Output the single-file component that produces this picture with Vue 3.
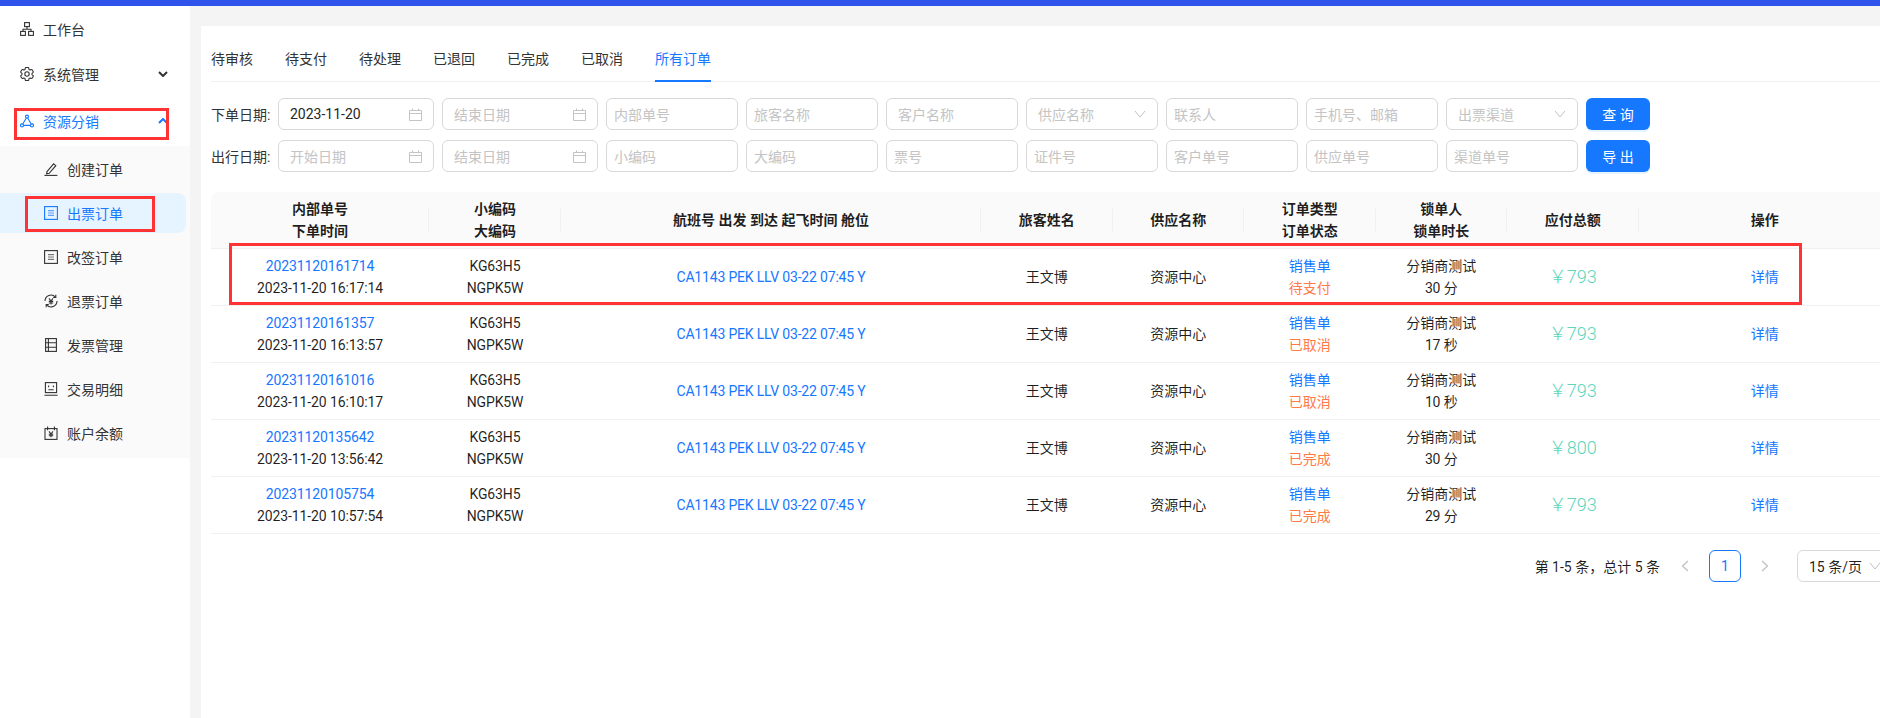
<script setup>
const subItems = [
  { label: '创建订单', icon: 'edit' },
  { label: '出票订单', icon: 'list', active: true },
  { label: '改签订单', icon: 'list' },
  { label: '退票订单', icon: 'refund' },
  { label: '发票管理', icon: 'invoice' },
  { label: '交易明细', icon: 'face' },
  { label: '账户余额', icon: 'wallet' }
]
const tabs = ['待审核', '待支付', '待处理', '已退回', '已完成', '已取消', '所有订单']
const filterRows = [
  {
    label: '下单日期:',
    fields: [
      { text: '2023-11-20', type: 'date', value: true },
      { text: '结束日期', type: 'date' },
      { text: '内部单号' },
      { text: '旅客名称' },
      { text: '客户名称', wide: true },
      { text: '供应名称', type: 'select' },
      { text: '联系人' },
      { text: '手机号、邮箱' },
      { text: '出票渠道', type: 'select' }
    ],
    button: '查 询'
  },
  {
    label: '出行日期:',
    fields: [
      { text: '开始日期', type: 'date' },
      { text: '结束日期', type: 'date' },
      { text: '小编码' },
      { text: '大编码' },
      { text: '票号' },
      { text: '证件号' },
      { text: '客户单号' },
      { text: '供应单号' },
      { text: '渠道单号' }
    ],
    button: '导 出'
  }
]
const orders = [
  { id: '20231120161714', time: '2023-11-20 16:17:14', status: '待支付', lock: '30 分', price: '793' },
  { id: '20231120161357', time: '2023-11-20 16:13:57', status: '已取消', lock: '17 秒', price: '793' },
  { id: '20231120161016', time: '2023-11-20 16:10:17', status: '已取消', lock: '10 秒', price: '793' },
  { id: '20231120135642', time: '2023-11-20 13:56:42', status: '已完成', lock: '30 分', price: '800' },
  { id: '20231120105754', time: '2023-11-20 10:57:54', status: '已完成', lock: '29 分', price: '793' }
]
</script>

<template>
  <div class="page">
    <div class="topbar"></div>
    <div class="body">
      <aside class="sidebar">
        <nav class="menu">
          <div class="item top first">
            <svg class="ico" viewBox="0 0 14 14" fill="none" stroke="currentColor" stroke-width="1.1">
              <rect x="4.6" y=".6" width="4.8" height="4" />
              <rect x=".6" y="9.4" width="4.8" height="4" />
              <rect x="8.6" y="9.4" width="4.8" height="4" />
              <path d="M7 4.6v2.6M3 9.4V7.2h8v2.2" />
            </svg>
            <span>工作台</span>
          </div>
          <div class="item top">
            <svg class="ico" viewBox="2.4 2.4 19.2 19.2" fill="none" stroke="currentColor" stroke-width="1.5">
              <path d="M9.594 3.94c.09-.542.56-.94 1.11-.94h2.593c.55 0 1.02.398 1.11.94l.213 1.281c.063.374.313.686.645.87.074.04.147.083.22.127.325.196.72.257 1.075.124l1.217-.456a1.125 1.125 0 0 1 1.37.49l1.296 2.247a1.125 1.125 0 0 1-.26 1.431l-1.003.827c-.293.241-.438.613-.43.992a7.723 7.723 0 0 1 0 .255c-.008.378.137.75.43.991l1.004.827c.424.35.534.955.26 1.43l-1.298 2.247a1.125 1.125 0 0 1-1.369.491l-1.217-.456c-.355-.133-.75-.072-1.076.124a6.47 6.47 0 0 1-.22.128c-.331.183-.581.495-.644.869l-.213 1.281c-.09.543-.56.94-1.11.94h-2.594c-.55 0-1.019-.398-1.11-.94l-.213-1.281c-.062-.374-.312-.686-.644-.87a6.52 6.52 0 0 1-.22-.127c-.325-.196-.72-.257-1.076-.124l-1.217.456a1.125 1.125 0 0 1-1.369-.49l-1.297-2.247a1.125 1.125 0 0 1 .26-1.431l1.004-.827c.292-.24.437-.613.43-.991a6.932 6.932 0 0 1 0-.255c.007-.38-.138-.751-.43-.992l-1.004-.827a1.125 1.125 0 0 1-.26-1.43l1.297-2.247a1.125 1.125 0 0 1 1.37-.491l1.216.456c.356.133.751.072 1.076-.124.072-.044.146-.086.22-.128.332-.183.582-.495.644-.869l.214-1.28Z" />
              <circle cx="12" cy="12" r="3" />
            </svg>
            <span>系统管理</span>
            <svg class="chev" viewBox="0 0 10 6" fill="none" stroke="currentColor" stroke-width="2">
              <path d="M1 1l4 4 4-4" />
            </svg>
          </div>
          <div class="item top open">
            <svg class="ico" viewBox="0 0 14 14" fill="none" stroke="currentColor" stroke-width="1.1">
              <circle cx="7" cy="2.6" r="1.5" />
              <circle cx="2" cy="11.4" r="1.5" />
              <circle cx="12" cy="11.4" r="1.5" />
              <path d="M6.3 4L2.8 10M7.7 4l3.5 6M3.5 11.4h7" />
            </svg>
            <span>资源分销</span>
            <svg class="chev" viewBox="0 0 10 6" fill="none" stroke="currentColor" stroke-width="2">
              <path d="M1 5l4-4 4 4" />
            </svg>
          </div>
          <div class="sub">
            <div v-for="s in subItems" :key="s.label" class="item subitem" :class="{ active: s.active }">
              <svg class="ico" viewBox="0 0 14 14" fill="none" stroke="currentColor" stroke-width="1.1">
                <template v-if="s.icon === 'edit'">
                  <path d="M3 9.6L9.6 1.8l2.2 1.9-6.6 7.6-2.6.5z" />
                  <path d="M.4 13.4h13" />
                </template>
                <template v-else-if="s.icon === 'list'">
                  <rect x=".6" y=".6" width="12.8" height="12.8" />
                  <path d="M4 4.6h6M4 7h6M4 9.4h6" stroke-width="1.2" opacity=".65" />
                </template>
                <template v-else-if="s.icon === 'refund'">
                  <path d="M1 7a6 6 0 0 1 10.4-4M13 7a6 6 0 0 1-10.4 4" />
                  <path d="M11.8.8v2.6H9.2M2.2 13.2v-2.6h2.6" />
                  <path d="M5 4.4L7 7l2-2.6M4.8 7.4h4.4M4.8 9h4.4M7 7v3.4" />
                </template>
                <template v-else-if="s.icon === 'invoice'">
                  <rect x="1.6" y=".6" width="10.8" height="12.8" />
                  <path d="M1.6 4.8h10.8M1.6 9.2h10.8M4.4.6v12.8" />
                </template>
                <template v-else-if="s.icon === 'face'">
                  <rect x="1.4" y=".6" width="11.2" height="10" />
                  <path d="M4.6 3.6v1.6M9.4 3.6v1.6M4.4 7.8h5.2M.4 13.2h13.2" />
                </template>
                <template v-else>
                  <rect x="1" y="2.6" width="12" height="10.8" />
                  <path d="M3.6.6v3.6M10.4.6v3.6" />
                  <path d="M5 5.4L7 8l2-2.6M4.8 8.2h4.4M4.8 9.8h4.4M7 8v3.2" />
                </template>
              </svg>
              <span>{{ s.label }}</span>
            </div>
          </div>
        </nav>
      </aside>

      <main class="main">
        <section class="card">
          <div class="tabs">
            <div v-for="(t, i) in tabs" :key="t" class="tab" :class="{ current: i === tabs.length - 1 }">{{ t }}</div>
          </div>

          <div class="filters">
            <div v-for="row in filterRows" :key="row.label" class="filter-row">
              <label class="flabel">{{ row.label }}</label>
              <div
                v-for="f in row.fields"
                :key="f.text"
                class="field"
                :class="{
                  date: f.type === 'date',
                  select: f.type === 'select',
                  roomy: f.type || f.wide,
                  filled: f.value
                }"
              >
                <span class="ftext">{{ f.text }}</span>
                <svg v-if="f.type === 'date'" class="fico" viewBox="0 0 13 13" fill="none" stroke="currentColor" stroke-width="1">
                  <path d="M.5 2.5h12v10H.5zM.5 5.5h12M3.5.5v2M9.5.5v2" />
                </svg>
                <svg v-if="f.type === 'select'" class="fico" viewBox="0 0 12 8" fill="none" stroke="currentColor" stroke-width="1">
                  <path d="M1 1l5 6 5-6" />
                </svg>
              </div>
              <button class="btn" type="button">{{ row.button }}</button>
            </div>
          </div>

          <table class="table">
            <colgroup>
              <col class="c1" />
              <col class="c2b" />
              <col class="c3" />
              <col class="c2" />
              <col class="c2" />
              <col class="c2" />
              <col class="c2" />
              <col class="c2" />
              <col />
            </colgroup>
            <thead>
              <tr>
                <th>内部单号<br />下单时间</th>
                <th>小编码<br />大编码</th>
                <th>航班号 出发 到达 起飞时间 舱位</th>
                <th>旅客姓名</th>
                <th>供应名称</th>
                <th>订单类型<br />订单状态</th>
                <th>锁单人<br />锁单时长</th>
                <th>应付总额</th>
                <th>操作</th>
              </tr>
            </thead>
            <tbody>
              <tr v-for="o in orders" :key="o.id">
                <td>
                  <span class="link num">{{ o.id }}</span><br /><span class="num">{{ o.time }}</span>
                </td>
                <td><span class="num">KG63H5</span><br /><span class="num">NGPK5W</span></td>
                <td><span class="link num flight">CA1143 PEK LLV 03-22 07:45 Y</span></td>
                <td>王文博</td>
                <td>资源中心</td>
                <td><span class="link">销售单</span><br /><span class="warn">{{ o.status }}</span></td>
                <td>分销商测试<br /><span class="num">{{ o.lock }}</span></td>
                <td><span class="price">￥{{ o.price }}</span></td>
                <td><span class="link">详情</span></td>
              </tr>
            </tbody>
          </table>

          <div class="pager">
            <span class="total">第 1-5 条，总计 5 条</span>
            <span class="pg arrow">
              <svg viewBox="0 0 8 12" fill="none" stroke="currentColor" stroke-width="1.2"><path d="M7 1L1.5 6 7 11" /></svg>
            </span>
            <span class="pg cur">1</span>
            <span class="pg arrow">
              <svg viewBox="0 0 8 12" fill="none" stroke="currentColor" stroke-width="1.2"><path d="M1 1l5.5 5L1 11" /></svg>
            </span>
            <span class="size">
              15 条/页
              <svg viewBox="0 0 12 8" fill="none" stroke="currentColor" stroke-width="1"><path d="M1 1l5 6 5-6" /></svg>
            </span>
          </div>
        </section>
      </main>
    </div>

    <div class="mark mark-menu"></div>
    <div class="mark mark-sub"></div>
    <div class="mark mark-row"></div>
  </div>
</template>

<style>
html, body { margin: 0; overflow: hidden; background: #fff; }
</style>

<style scoped>
.page {
  position: relative;
  width: 1880px;
  height: 718px;
  overflow: hidden;
  display: flex;
  flex-direction: column;
  font-family: Roboto, "Noto Sans CJK SC", sans-serif;
  font-size: 14px;
  color: rgba(0, 0, 0, .88);
}
.topbar { height: 6px; background: #2f54eb; flex: none; }
.body { flex: 1; display: flex; min-height: 0; background: #f4f4f4; }

.sidebar { width: 190px; flex: none; background: #fff; }
.menu { padding-top: 3px; display: flex; flex-direction: column; }
.item {
  height: 40px;
  display: flex;
  align-items: center;
  color: #333;
}
.top { padding-left: 20px; margin-bottom: 4px; position: relative; }
.top.first { margin-bottom: 5px; }
.top.open { margin-top: 3px; margin-bottom: 5px; color: #1677ff; }
.top > span { margin-left: 9px; }
.ico { width: 14px; height: 14px; flex: none; }
.chev { width: 10px; height: 6px; position: absolute; left: 158px; top: 17px; }
.sub { background: #fafafa; padding: 3px 0 1px; display: flex; flex-direction: column; }
.subitem { padding-left: 44px; margin-bottom: 4px; width: 186px; box-sizing: border-box; border-radius: 0 8px 8px 0; }
.subitem > span { margin-left: 9px; }
.subitem.active { background: #e6f4ff; color: #1677ff; }

.main { flex: 1; min-width: 0; padding: 20px 0 0 11px; }
.card { height: 100%; background: #fff; padding-left: 10px; }

.tabs {
  height: 55px;
  display: flex;
  gap: 32px;
  border-bottom: 1px solid #f0f0f0;
}
.tab { line-height: 66px; height: 55px; color: #333; }
.tab.current { color: #1677ff; box-shadow: inset 0 -2px 0 #1677ff; height: 56px; }

.filters { margin-top: 16px; display: flex; flex-direction: column; gap: 10px; }
.filter-row { display: flex; align-items: center; gap: 8px; }
.flabel { width: 59px; flex: none; white-space: nowrap; color: #333; }
.field {
  width: 132px;
  height: 32px;
  box-sizing: border-box;
  border: 1px solid #d9d9d9;
  border-radius: 6px;
  padding: 0 7px;
  display: flex;
  align-items: center;
  justify-content: space-between;
  color: #c4c4c4;
  flex: none;
}
.field.roomy { padding: 0 11px; }
.field.date { width: 156px; }
.field.filled { color: #262626; }
.fico { width: 13px; height: 13px; color: #c4c4c4; flex: none; }
.field.select .fico { width: 12px; height: 8px; }
.btn {
  width: 64px;
  height: 32px;
  border: 0;
  border-radius: 6px;
  background: #1677ff;
  color: #fff;
  font: inherit;
  box-shadow: 0 2px 0 rgba(5, 145, 255, .1);
  padding: 0;
}

.table {
  margin-top: 20px;
  width: 1680px;
  table-layout: fixed;
  border-collapse: separate;
  border-spacing: 0;
}
.c1 { width: 218px; }
.c2b { width: 132px; }
.c2 { width: 131.5px; }
.c3 { width: 420px; }
th {
  height: 56px;
  padding: 0;
  background: #fafafa;
  border-bottom: 1px solid #f0f0f0;
  font-weight: 600;
  line-height: 22px;
  color: rgba(0, 0, 0, .88);
  position: relative;
}
th:first-child { border-top-left-radius: 8px; }
th:not(:last-child)::after {
  content: "";
  position: absolute;
  right: 0;
  top: 17px;
  width: 1px;
  height: 22px;
  background: #f0f0f0;
}
td {
  height: 56px;
  padding: 0;
  text-align: center;
  line-height: 22px;
  border-bottom: 1px solid #f0f0f0;
  color: rgba(0, 0, 0, .88);
}
.num { letter-spacing: -.12px; }
.flight { letter-spacing: -.18px; }
.link { color: #1677ff; }
.warn { color: #ff7a45; }
.price { color: #5cd6b8; font-size: 18px; font-weight: 300; }

.pager {
  width: 1678px;
  margin-top: 16px;
  display: flex;
  align-items: center;
  justify-content: flex-end;
  gap: 8px;
}
.total { margin-right: 1px; }
.pg {
  width: 32px;
  height: 32px;
  box-sizing: border-box;
  display: flex;
  align-items: center;
  justify-content: center;
  border-radius: 6px;
}
.pg.arrow { color: #bfbfbf; }
.pg.arrow svg { width: 8px; height: 12px; }
.pg.cur { border: 1px solid #1677ff; color: #1677ff; }
.size {
  width: 92px;
  height: 32px;
  margin-left: 8px;
  box-sizing: border-box;
  border: 1px solid #d9d9d9;
  border-radius: 6px;
  padding: 0 7px 0 11px;
  display: flex;
  align-items: center;
  justify-content: space-between;
}
.size svg { width: 12px; height: 8px; color: #bfbfbf; }

.mark {
  position: absolute;
  box-sizing: border-box;
  border: 3px solid #ff3333;
  pointer-events: none;
}
.mark-menu { left: 14px; top: 108px; width: 155px; height: 32px; }
.mark-sub { left: 25px; top: 196px; width: 130px; height: 36px; }
.mark-row { left: 229px; top: 243px; width: 1573px; height: 62px; }
</style>
